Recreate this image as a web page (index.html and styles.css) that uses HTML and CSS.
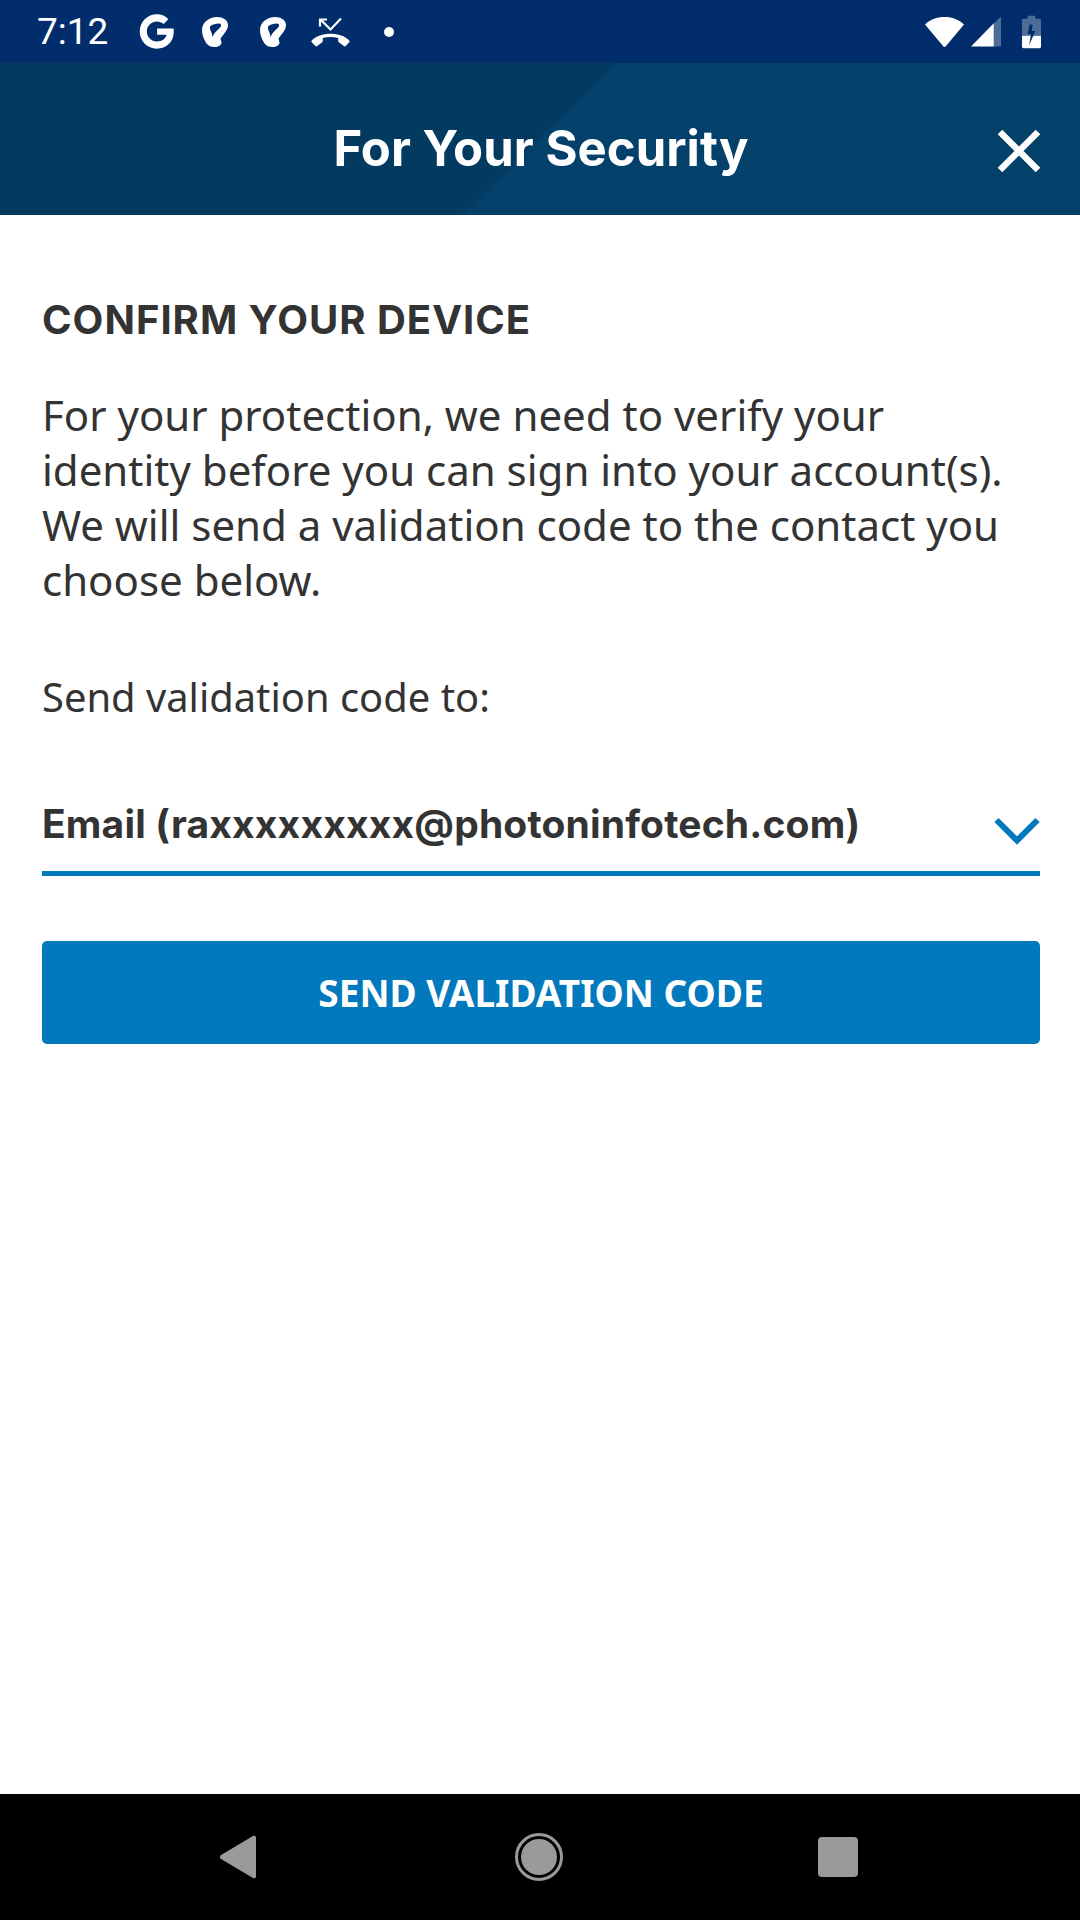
FILE: index.html
```html
<!DOCTYPE html>
<html lang="en">
<head>
<meta charset="utf-8">
<title>For Your Security</title>
<link rel="stylesheet" href="styles.css">
</head>
<body>
<div class="screen">
  <div class="status">
    <div class="status-left">
      <span class="time">7:12</span>
      <svg class="ic-g" viewBox="0 0 36 36"><path d="M34.600 15H18.600v6.200h9.200c-1 4-4.700 6.500-9.400 6.500-5.500 0-9.800-4.300-9.800-9.700s4.300-9.700 9.800-9.700c2.500 0 4.800.9 6.500 2.500l4.600-4.600C26.800 3 22.900 1.300 18.400 1.300 9 1.300 1.700 8.800 1.700 18S9 34.700 18.400 34.700c8.900 0 16.400-6.300 16.400-16.700 0-1-.1-2-.2-3z" fill="#fff"/></svg>
      <svg class="ic-ear" viewBox="0 0 26 30"><path fill-rule="evenodd" d="M15 0C7 0 0 5.500 0 13c0 5 2 10 4.500 13.500C6.500 29 9 30 12.500 30c4 0 7-2 7-4.500 0-1.500-.9-2.300-.9-3.300 0-1.500 2-3.500 3.900-6C24.500 13.700 26 11 26 8c0-5-5-8-11-8zM8.500 9c2-1.500 5-2.500 8.500-2.500 1.500 0 2.500 1 2 2.500-.8 2.500-6 5-8.500 11-.5-4-1-4-1.500-5.500-.5-1.300-1.800-4.500-.5-5.500z" fill="#fff"/></svg>
      <svg class="ic-ear" viewBox="0 0 26 30"><path fill-rule="evenodd" d="M15 0C7 0 0 5.500 0 13c0 5 2 10 4.500 13.500C6.500 29 9 30 12.500 30c4 0 7-2 7-4.500 0-1.500-.9-2.300-.9-3.300 0-1.500 2-3.500 3.900-6C24.500 13.700 26 11 26 8c0-5-5-8-11-8zM8.500 9c2-1.500 5-2.500 8.500-2.500 1.500 0 2.500 1 2 2.500-.8 2.500-6 5-8.500 11-.5-4-1-4-1.500-5.500-.5-1.300-1.800-4.500-.5-5.500z" fill="#fff"/></svg>
      <svg class="ic-call" viewBox="0 0 39 30"><path d="M.8 23.500C5.500 19 11.500 16.800 19.500 16.800s14 2.200 18.700 6.700c.6.600.6 1.200 0 1.800l-3.500 3.700c-.6.600-1.300.6-1.900.1l-5-3.800c-.4-.3-.6-.7-.6-1.200v-3c-2.500-.8-5-1.200-7.700-1.200s-5.200.4-7.700 1.200v3c0 .5-.2.900-.6 1.200l-5 3.800c-.6.500-1.300.5-1.900-.1L.8 25.300c-.6-.6-.6-1.200 0-1.800z" fill="#fff"/><path d="M30 1.500 19.500 12.500 10.500 3.500M9 9.500V2.500H16" fill="none" stroke="#fff" stroke-width="2.200"/></svg>
      <span class="dot"></span>
    </div>
    <div class="status-right">
      <svg class="ic-wifi" viewBox="0 0 40 32"><path d="M.5 8.500C5.500 3.500 12 1 20 1s14.500 2.500 19.500 7.500L21.500 30c-.8 1.200-2.200 1.200-3 0z" fill="#fff"/></svg>
      <svg class="ic-signal" viewBox="0 0 32 32"><path d="M0 31 23.500 7V31z" fill="#fff"/><path d="M23.500 7 30 1c.6-.5 1-.2 1 .5V30c0 .6-.4 1-1 1h-6.500z" fill="#fff" fill-opacity=".3"/></svg>
      <svg class="ic-batt" viewBox="0 0 20 34"><path d="M6 0h8v3h4.500c.8 0 1.500.7 1.500 1.500V21H0V4.500C0 3.700.7 3 1.500 3H6z" fill="#fff" fill-opacity=".3"/><path d="M0 21h20v11.500c0 .8-.7 1.500-1.500 1.500h-17C.7 34 0 33.300 0 32.500z" fill="#fff"/><path d="M11 9h-3l-2 10h3.500l-2 12 6.500-15h-3.500z" fill="#012d6c"/></svg>
    </div>
  </div>
  <header class="appbar">
    <h1 class="title">For Your Security</h1>
    <svg class="close" viewBox="0 0 44 44"><path d="M3 3 41 41M41 3 3 41" stroke="#fff" stroke-width="6.500" fill="none"/></svg>
  </header>
  <main class="content">
    <h2 class="heading">CONFIRM YOUR DEVICE</h2>
    <p class="intro">For your protection, we need to verify your identity before you can sign into your account(s). We will send a validation code to the contact you choose below.</p>
    <p class="label">Send validation code to:</p>
    <div class="select">
      <span class="select-value">Email (raxxxxxxxxx@photoninfotech.com)</span>
      <svg class="chevron" viewBox="0 0 46 28"><path d="M2.500 3 23 23.500 43.500 3" stroke="#0279bd" stroke-width="6" fill="none"/></svg>
    </div>
    <button class="send" type="button">SEND VALIDATION CODE</button>
  </main>
  <nav class="navbar">
    <svg class="nav-back" viewBox="0 0 38 44"><path d="M34 1 2 20c-1.500 1-1.500 3 0 4l32 19c1.500.8 3 0 3-1.500v-39C37 1 35.500.2 34 1z" fill="#9a9a9a"/></svg>
    <svg class="nav-home" viewBox="0 0 48 48"><circle cx="24" cy="24" r="22.500" fill="none" stroke="#9a9a9a" stroke-width="3"/><circle cx="24" cy="24" r="18" fill="#9a9a9a"/></svg>
    <span class="nav-recent"></span>
  </nav>
</div>
</body>
</html>
```
FILE: styles.css
```css
* { box-sizing: border-box; }
html, body { margin: 0; padding: 0; }
.screen {
  width: 1080px;
  height: 1920px;
  display: flex;
  flex-direction: column;
  background: #fff;
  overflow: hidden;
}
.status {
  height: 63px;
  flex: none;
  background: #012d6c;
  display: flex;
  justify-content: space-between;
  align-items: center;
  padding: 0 39px 0 37px;
}
.status-left, .status-right { display: flex; align-items: center; }
.time {
  font: 400 37px/1 Roboto, sans-serif;
  color: #fff;
  width: 101px;
}
.ic-g { width: 37px; height: 37px; margin-right: 27px; }
.ic-ear { width: 26px; height: 30px; margin-right: 32px; }
.ic-ear + .ic-ear { margin-right: 25px; }
.ic-call { width: 39px; height: 30px; margin-right: 34px; }
.dot { width: 10px; height: 10px; border-radius: 50%; background: #fff; }
.ic-wifi { width: 41px; height: 32px; margin-right: 6px; }
.ic-signal { width: 31px; height: 32px; margin-right: 20px; }
.ic-batt { width: 19px; height: 34px; }
.appbar {
  height: 152px;
  flex: none;
  position: relative;
  display: flex;
  align-items: center;
  justify-content: center;
  padding-top: 18px;
  background: linear-gradient(135.5deg, #023a60 0, #023a60 49.9%, #03416b 49.9%, #03416b 100%);
}
.title {
  margin: 0 0 0 2px;
  font: 700 49px/1 Inter, sans-serif;
  letter-spacing: .05px;
  color: #fff;
}
.close {
  position: absolute;
  right: 39px;
  top: 66px;
  width: 44px;
  height: 44px;
}
.content {
  flex: 1;
  padding: 85px 40px 0 42px;
  color: #333;
}
.heading {
  margin: 0;
  font: 700 40px/1 Inter, sans-serif;
  letter-spacing: 1px;
  color: #333;
}
.intro {
  margin: 47px 0 0;
  font: 400 42px/55px "Noto Sans", sans-serif;
  color: #333;
}
.label {
  margin: 66px 0 0;
  font: 400 39.900px/1.2 "Noto Sans", sans-serif;
}
.select {
  margin-top: 73px;
  height: 82px;
  border-bottom: 5px solid #0279bd;
  display: flex;
  justify-content: space-between;
  align-items: center;
  padding-bottom: 18px;
}
.select-value { font: 700 39px/1 Inter, sans-serif; letter-spacing: .17px; }
.chevron { width: 46px; height: 28px; margin-top: 16px; }
.send {
  display: block;
  width: 100%;
  height: 103px;
  margin-top: 65px;
  border: 0;
  border-radius: 5px;
  background: #0279bd;
  color: #fff;
  font: 700 37px/1 "Noto Sans", sans-serif;
}
.navbar {
  height: 126px;
  flex: none;
  background: #000;
  position: relative;
  display: flex;
  align-items: center;
}
.nav-back { position: absolute; left: 219px; top: 41px; width: 38px; height: 44px; }
.nav-home { position: absolute; left: 515px; top: 39px; width: 48px; height: 48px; }
.nav-recent { position: absolute; left: 818px; top: 43px; width: 40px; height: 40px; background: #9a9a9a; border-radius: 4px; }
```
